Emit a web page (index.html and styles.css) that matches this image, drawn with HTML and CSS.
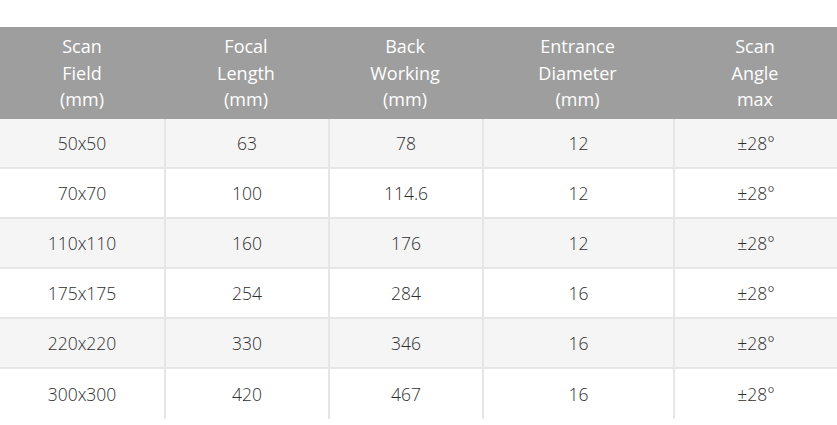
FILE: index.html
```html
<!DOCTYPE html>
<html>
<head>
<meta charset="utf-8">
<link rel="stylesheet" href="styles.css">
</head>
<body>
<table class="spec">
  <colgroup>
    <col class="c1"><col class="c2"><col class="c3"><col class="c4"><col class="c5">
  </colgroup>
  <thead>
    <tr>
      <th>Scan<br>Field<br>(mm)</th>
      <th>Focal<br>Length<br>(mm)</th>
      <th>Back<br>Working<br>(mm)</th>
      <th>Entrance<br>Diameter<br>(mm)</th>
      <th>Scan<br>Angle<br>max</th>
    </tr>
  </thead>
  <tbody>
    <tr><td>50x50</td><td>63</td><td>78</td><td>12</td><td>±28°</td></tr>
    <tr><td>70x70</td><td>100</td><td>114.6</td><td>12</td><td>±28°</td></tr>
    <tr><td>110x110</td><td>160</td><td>176</td><td>12</td><td>±28°</td></tr>
    <tr><td>175x175</td><td>254</td><td>284</td><td>16</td><td>±28°</td></tr>
    <tr><td>220x220</td><td>330</td><td>346</td><td>16</td><td>±28°</td></tr>
    <tr><td>300x300</td><td>420</td><td>467</td><td>16</td><td>±28°</td></tr>
  </tbody>
</table>
</body>
</html>
```
FILE: styles.css
```css
html, body {
  margin: 0;
  padding: 0;
  background: #ffffff;
}
body {
  padding-top: 27px;
  font-family: "Open Sans", "Noto Sans", sans-serif;
}
.spec {
  width: 837px;
  border-collapse: separate;
  border-spacing: 0;
  table-layout: fixed;
}
.c1 { width: 164px; }
.c2 { width: 164px; }
.c3 { width: 154px; }
.c4 { width: 191px; }
.c5 { width: 164px; }
.spec th {
  box-sizing: border-box;
  background: #9e9e9e;
  color: #ffffff;
  font-weight: 400;
  font-size: 18px;
  line-height: 26.5px;
  height: 92px;
  padding: 0;
  text-align: center;
  vertical-align: middle;
}
.spec td {
  box-sizing: border-box;
  height: 50px;
  padding: 0;
  text-align: center;
  vertical-align: middle;
  font-size: 17.5px;
  font-weight: 300;
  color: #2e2e2e;
  border-bottom: 2px solid #e6e6e6;
  border-left: 2px solid #e6e6e6;
}
.spec td:first-child {
  border-left: none;
}
.spec tbody tr:nth-child(odd) td {
  background: #f5f5f5;
}
.spec tbody tr:last-child td {
  border-bottom: none;
}
```
